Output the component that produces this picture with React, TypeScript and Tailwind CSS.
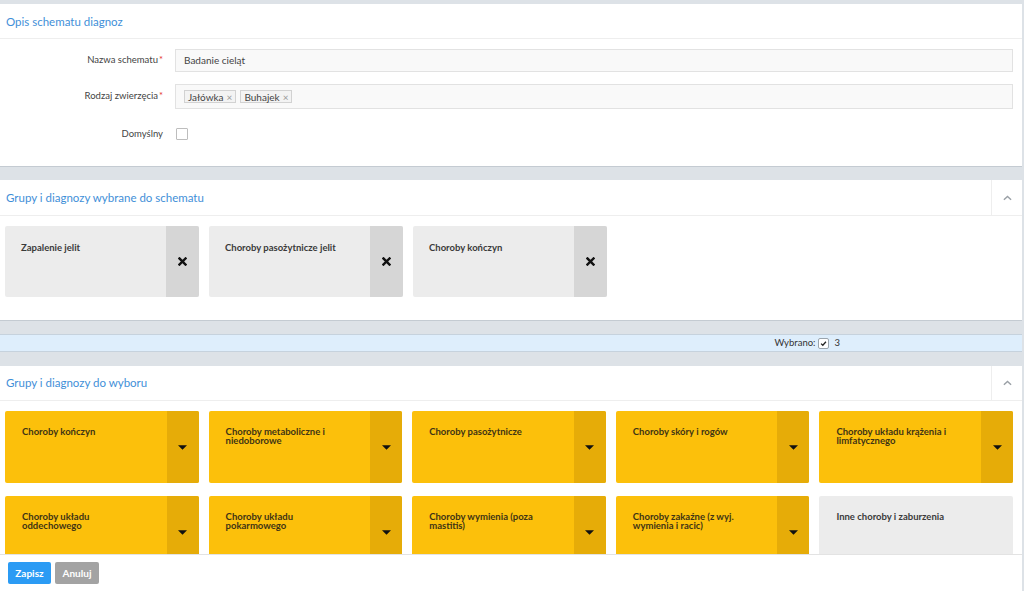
import React from "react";

const selected = ["Zapalenie jelit", "Choroby pasożytnicze jelit", "Choroby kończyn"];

const available: { name: string; expandable: boolean }[] = [
  { name: "Choroby kończyn", expandable: true },
  { name: "Choroby metaboliczne i niedoborowe", expandable: true },
  { name: "Choroby pasożytnicze", expandable: true },
  { name: "Choroby skóry i rogów", expandable: true },
  { name: "Choroby układu krążenia i limfatycznego", expandable: true },
  { name: "Choroby układu oddechowego", expandable: true },
  { name: "Choroby układu pokarmowego", expandable: true },
  { name: "Choroby wymienia (poza mastitis)", expandable: true },
  { name: "Choroby zakaźne (z wyj. wymienia i racic)", expandable: true },
  { name: "Inne choroby i zaburzenia", expandable: false },
];

const ChevronUp = () => (
  <svg viewBox="0 0 10 6" className="w-[9px] h-[6px]" fill="none" stroke="#9aa0a6" strokeWidth="1.6">
    <path d="M1 5 L5 1.3 L9 5" />
  </svg>
);

const BoldX = () => (
  <svg viewBox="0 0 10 10" className="w-[9px] h-[9px]" stroke="#111" strokeWidth="2.6" strokeLinecap="square">
    <path d="M1.6 1.6 L8.4 8.4 M8.4 1.6 L1.6 8.4" />
  </svg>
);

const CaretDown = () => (
  <svg viewBox="0 0 10 5" className="w-[9px] h-[5px]" fill="#111">
    <path d="M0 0 H10 L5 5 Z" />
  </svg>
);

const FormLabel = ({ text, required }: { text: string; required?: boolean }) => (
  <div className="w-[163px] shrink-0 text-right text-[9.5px] text-[#444]">
    {text}
    {required && <span className="text-[#e53935] ml-[1px]">*</span>}
  </div>
);

const Tag = ({ label }: { label: string }) => (
  <span className="inline-flex items-center h-[13px] px-[3px] gap-[3px] border border-[#d2d2d2] bg-[#f3f3f3] text-[10px] text-[#444] leading-none">
    {label}
    <span className="text-[#999] text-[10px]">×</span>
  </span>
);

export default function App() {
  return (
    <div className="h-[591px] w-[1024px] flex flex-col overflow-hidden bg-[#dde2e7] font-['Lato','Noto_Sans',sans-serif]">
      <div className="flex-1 overflow-hidden pt-[4px] pr-[2px]">
        {/* Opis schematu */}
        <div className="bg-white border-b border-[#c4cbd2] h-[163px]">
          <div className="h-[35px] flex border-b border-[#eeeeee]">
            <div className="flex-1 flex items-center pl-[6px] pt-[2px] text-[11.5px] text-[#3f8fd8]">
              Opis schematu diagnoz
            </div>
          </div>
          <div className="pt-[10px] pr-[9px] flex flex-col">
            <div className="flex items-center">
              <FormLabel text="Nazwa schematu" required />
              <div className="ml-[12px] flex-1 h-[23px] border border-[#e2e2e2] bg-[#f9f9f9] flex items-center pl-[8px] text-[10px] text-[#444]">
                Badanie cieląt
              </div>
            </div>
            <div className="flex items-center mt-[12px]">
              <FormLabel text="Rodzaj zwierzęcia" required />
              <div className="ml-[12px] flex-1 h-[25px] border border-[#e2e2e2] bg-[#f9f9f9] flex items-center pl-[8px] gap-[4px]">
                <Tag label="Jałówka" />
                <Tag label="Buhajek" />
              </div>
            </div>
            <div className="flex items-center mt-[18px]">
              <FormLabel text="Domyślny" />
              <div className="ml-[13px] w-[12px] h-[12px] border border-[#bdbdbd] rounded-[1px] bg-white" />
            </div>
          </div>
        </div>

        {/* Wybrane */}
        <div className="mt-[13px] bg-white border-b border-[#c4cbd2] h-[141px]">
          <div className="h-[36px] flex border-b border-[#eeeeee]">
            <div className="flex-1 flex items-center pl-[6px] text-[11.5px] text-[#3f8fd8]">
              Grupy i diagnozy wybrane do schematu
            </div>
            <div className="w-[31px] border-l border-[#eeeeee] flex items-center justify-center">
              <ChevronUp />
            </div>
          </div>
          <div className="pt-[10px] pl-[5px] flex gap-[10px]">
            {selected.map((name) => (
              <div key={name} className="w-[194px] h-[71px] flex rounded-[2px] bg-[#ececec] overflow-hidden">
                <div className="flex-1 pl-[16px] pt-[17px] text-[9.5px] font-bold text-[#3a3a3a] leading-[10px]">{name}</div>
                <div className="w-[33px] bg-[#d6d6d6] flex items-center justify-center">
                  <BoldX />
                </div>
              </div>
            ))}
          </div>
        </div>

        {/* Wybrano bar */}
        <div className="mt-[13px] h-[18px] bg-[#deeefc] border-y border-[#c6d2dd] flex items-center justify-end pr-[182px] text-[9.5px] text-[#333]">
          <span>Wybrano:</span>
          <span className="ml-[3px] w-[11px] h-[11px] border border-[#9aa4ad] rounded-[2px] bg-white flex items-center justify-center">
            <svg viewBox="0 0 10 10" className="w-[7px] h-[7px]" fill="none" stroke="#222" strokeWidth="1.8">
              <path d="M1.5 5.2 L4 7.5 L8.5 2.5" />
            </svg>
          </span>
          <span className="ml-[5px]">3</span>
        </div>

        {/* Do wyboru */}
        <div className="mt-[14px] bg-white h-[300px]">
          <div className="h-[35px] flex border-b border-[#eeeeee]">
            <div className="flex-1 flex items-center pl-[6px] text-[11.5px] text-[#3f8fd8]">
              Grupy i diagnozy do wyboru
            </div>
            <div className="w-[31px] border-l border-[#eeeeee] flex items-center justify-center">
              <ChevronUp />
            </div>
          </div>
          <div className="pt-[10px] pl-[5px] pr-[9px] grid grid-cols-5 gap-x-[10px] gap-y-[13px]">
            {available.map((item) =>
              item.expandable ? (
                <div key={item.name} className="h-[72px] flex rounded-[2px] bg-[#fcc00b] overflow-hidden">
                  <div className="flex-1 pl-[17px] pr-[24px] pt-[16px] text-[9.5px] font-bold text-[#3f3415] leading-[9px]">
                    {item.name}
                  </div>
                  <div className="w-[32px] bg-[#e6ac08] flex items-center justify-center">
                    <CaretDown />
                  </div>
                </div>
              ) : (
                <div key={item.name} className="h-[72px] rounded-[2px] bg-[#ececec] pl-[17px] pt-[16px] text-[9.5px] font-bold text-[#3a3a3a] leading-[9px]">
                  {item.name}
                </div>
              )
            )}
          </div>
        </div>
      </div>

      {/* Footer */}
      <div className="h-[37px] shrink-0 bg-white border-t border-[#e3e3e3] flex items-center pl-[8px] gap-[4px] mr-[2px]">
        <button className="h-[22px] w-[43px] rounded-[2px] bg-[#2b9bf4] text-white text-[10px] font-bold">Zapisz</button>
        <button className="h-[22px] w-[44px] rounded-[2px] bg-[#a3a3a3] text-white text-[10px] font-bold">Anuluj</button>
      </div>
    </div>
  );
}
